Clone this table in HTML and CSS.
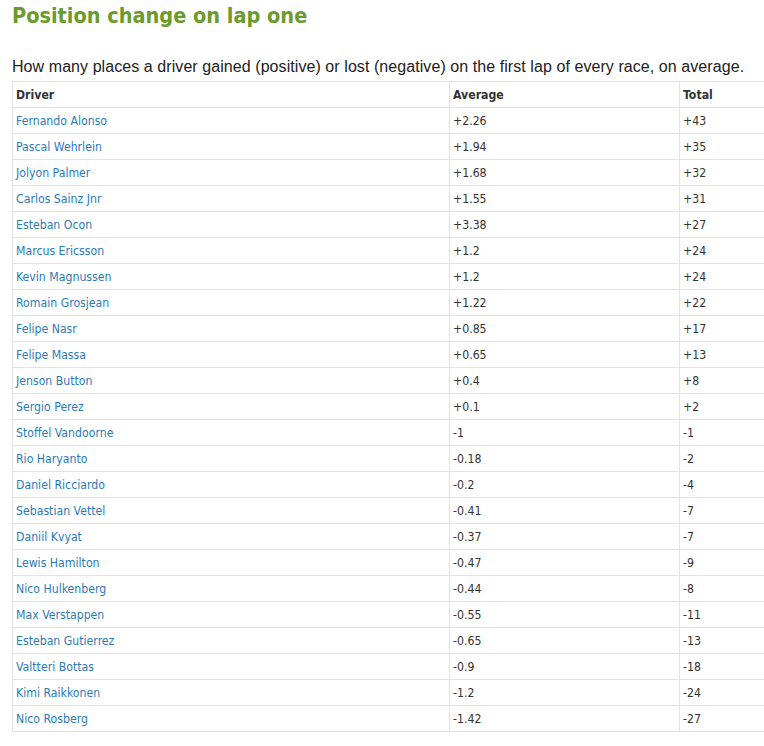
FILE: index.html
```html
<!DOCTYPE html>
<html>
<head>
<meta charset="utf-8">
<link rel="stylesheet" href="styles.css">
</head>
<body>
<h2 class="title">Position change on lap one</h2>
<p class="intro">How many places a driver gained (positive) or lost (negative) on the first lap of every race, on average.</p>
<table class="stats">
<thead>
<tr><th class="c-driver">Driver</th><th class="c-avg">Average</th><th class="c-total">Total</th></tr>
</thead>
<tbody>
<tr><td><a href="#">Fernando Alonso</a></td><td>+2.26</td><td>+43</td></tr>
<tr><td><a href="#">Pascal Wehrlein</a></td><td>+1.94</td><td>+35</td></tr>
<tr><td><a href="#">Jolyon Palmer</a></td><td>+1.68</td><td>+32</td></tr>
<tr><td><a href="#">Carlos Sainz Jnr</a></td><td>+1.55</td><td>+31</td></tr>
<tr><td><a href="#">Esteban Ocon</a></td><td>+3.38</td><td>+27</td></tr>
<tr><td><a href="#">Marcus Ericsson</a></td><td>+1.2</td><td>+24</td></tr>
<tr><td><a href="#">Kevin Magnussen</a></td><td>+1.2</td><td>+24</td></tr>
<tr><td><a href="#">Romain Grosjean</a></td><td>+1.22</td><td>+22</td></tr>
<tr><td><a href="#">Felipe Nasr</a></td><td>+0.85</td><td>+17</td></tr>
<tr><td><a href="#">Felipe Massa</a></td><td>+0.65</td><td>+13</td></tr>
<tr><td><a href="#">Jenson Button</a></td><td>+0.4</td><td>+8</td></tr>
<tr><td><a href="#">Sergio Perez</a></td><td>+0.1</td><td>+2</td></tr>
<tr><td><a href="#">Stoffel Vandoorne</a></td><td>-1</td><td>-1</td></tr>
<tr><td><a href="#">Rio Haryanto</a></td><td>-0.18</td><td>-2</td></tr>
<tr><td><a href="#">Daniel Ricciardo</a></td><td>-0.2</td><td>-4</td></tr>
<tr><td><a href="#">Sebastian Vettel</a></td><td>-0.41</td><td>-7</td></tr>
<tr><td><a href="#">Daniil Kvyat</a></td><td>-0.37</td><td>-7</td></tr>
<tr><td><a href="#">Lewis Hamilton</a></td><td>-0.47</td><td>-9</td></tr>
<tr><td><a href="#">Nico Hulkenberg</a></td><td>-0.44</td><td>-8</td></tr>
<tr><td><a href="#">Max Verstappen</a></td><td>-0.55</td><td>-11</td></tr>
<tr><td><a href="#">Esteban Gutierrez</a></td><td>-0.65</td><td>-13</td></tr>
<tr><td><a href="#">Valtteri Bottas</a></td><td>-0.9</td><td>-18</td></tr>
<tr><td><a href="#">Kimi Raikkonen</a></td><td>-1.2</td><td>-24</td></tr>
<tr><td><a href="#">Nico Rosberg</a></td><td>-1.42</td><td>-27</td></tr>
</tbody>
</table>
</body>
</html>
```

FILE: styles.css
```css
html, body {
  margin: 0;
  padding: 0;
  background: #fff;
  overflow: hidden;
}
body {
  padding: 0 0 0 12px;
  font-family: "DejaVu Sans Condensed", "DejaVu Sans", sans-serif;
  font-stretch: condensed;
  color: #222;
}
.title {
  margin: 0;
  padding-top: 3px;
  height: 54px;
  font-size: 21.5px;
  font-weight: bold;
  color: #6b9b2b;
  line-height: 25px;
}
.intro {
  margin: 0 0 4px;
  line-height: 20px;
  height: 20px;
  font-family: "Liberation Sans", Arial, sans-serif;
  font-stretch: normal;
  font-size: 16px;
  letter-spacing: 0.07px;
  color: #222;
}
.stats {
  border-collapse: collapse;
  width: 752px;
  table-layout: fixed;
  font-size: 12.2px;
}
.stats th, .stats td {
  border: 1px solid #e3e3e3;
  height: 26px;
  padding: 0 3px;
  text-align: left;
  vertical-align: middle;
  box-sizing: border-box;
}
.stats th:last-child, .stats td:last-child {
  border-right: none;
}
.stats th {
  font-weight: bold;
  color: #333;
}
.stats td {
  color: #333;
}
.c-driver { width: 437px; }
.c-avg { width: 230px; }
.c-total { width: 85px; }
.stats a {
  color: #2b7bbb;
  text-decoration: none;
}
```
